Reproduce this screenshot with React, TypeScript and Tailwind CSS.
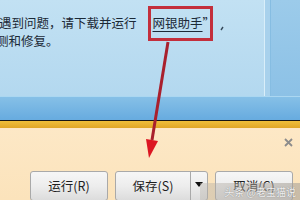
import React from "react";

const Btn = ({ label, className = "" }: { label: string; className?: string }) => (
  <div
    className={`h-[30px] flex items-center justify-center rounded-[3px] border border-[#a9a9a9] bg-gradient-to-b from-[#f6f6f6] via-[#ededed] to-[#dcdcdc] text-[12.5px] text-[#1f1f1f] ${className}`}
  >
    {label}
  </div>
);

export default function App() {
  return (
    <div className="relative w-[300px] h-[200px] overflow-hidden bg-[#fde6c0] font-['Noto_Sans_CJK_SC','Microsoft_YaHei',sans-serif]">
      {/* blue info panel */}
      <div className="flex h-[96px]">
        <div className="w-[265px] bg-gradient-to-b from-[#c2e1f3] to-[#b3d8ef] border-r border-[#d9eef9] pt-[14px] text-[12.5px] leading-[18px] text-[#1b2936] whitespace-nowrap">
          <div className="ml-[-1px] flex items-center">
            <span>遇到问题，请下载并运行</span>
            <span className="relative ml-[16px] inline-block">
              <span className="underline underline-offset-[3px] decoration-[1px]">网银助手</span>
              <span>”</span>
              <span className="absolute left-[-5px] top-[-8px] w-[65px] h-[35px] border-[3px] border-[#c32f3c]" />
            </span>
          </div>
          <div className="ml-[-4px]">测和修复。</div>
        </div>
        <div className="flex-1 flex">
          <div className="w-[6px] bg-[#a8d1ec] border-r border-[#86bde2]" />
          <div className="flex-1 bg-gradient-to-b from-[#9ccbea] to-[#8cc1e6]" />
        </div>
      </div>
      <div className="h-[24px] border-t border-[#abd7f1] bg-gradient-to-b from-[#86c0e7] to-[#67abdf]" />
      <div className="h-[1px] bg-[#151515]" />
      <div className="h-[7px] bg-gradient-to-b from-[#efbf3a] to-[#e0a626]" />

      {/* notification bar */}
      <div className="h-[72px] flex flex-col pt-[10px] pr-[7px] bg-gradient-to-b from-[#fde8c6] to-[#fbe3bb]">
        <div className="flex justify-end h-[10px]">
          <svg width="9" height="9" viewBox="0 0 9 9">
            <path d="M1 1L8 8M8 1L1 8" stroke="#8c8c8c" strokeWidth="1.8" />
          </svg>
        </div>
        <div className="mt-[24px] pl-[30px] flex gap-[7px]">
          <Btn label="运行(R)" className="w-[78px]" />
          <div className="w-[93px] h-[30px] flex rounded-[3px] border border-[#a9a9a9] bg-gradient-to-b from-[#f6f6f6] via-[#ededed] to-[#dcdcdc] text-[12.5px] text-[#1f1f1f]">
            <div className="w-[75px] flex items-center justify-center border-r border-[#a9a9a9]">保存(S)</div>
            <div className="flex-1 flex items-center justify-center pb-[3px]">
              <svg width="8" height="5" viewBox="0 0 8 5">
                <path d="M0 0H8L4 5Z" fill="#111" />
              </svg>
            </div>
          </div>
          <Btn label="取消(C)" className="w-[78px]" />
        </div>
      </div>

      {/* watermark */}
      <div className="absolute left-[200px] top-[183px] w-[100px] h-[17px] bg-gradient-to-r from-[#b8b2aa]/40 to-[#a8a29a]/60 flex items-center justify-end pr-[4px] text-[10px] text-white/90 [text-shadow:0_0_1px_#666]">
        头条 @老宝猫说
      </div>

      {/* red arrow annotation */}
      <svg className="absolute inset-0 pointer-events-none" width="300" height="200" viewBox="0 0 300 200">
        <line x1="168" y1="42" x2="152" y2="140" stroke="#a9202d" strokeWidth="3" />
        <polygon points="149,158 146,139 158,141" fill="#dc1622" />
        <path d="M221 30L223 27" stroke="#34485a" strokeWidth="1.4" />
      </svg>
    </div>
  );
}
